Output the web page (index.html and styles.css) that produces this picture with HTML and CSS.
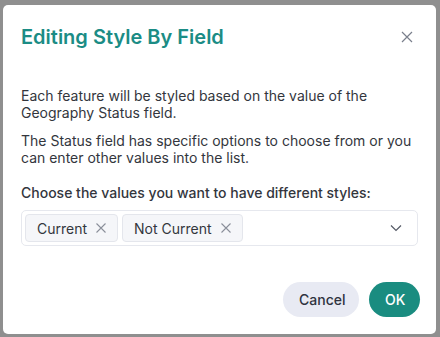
FILE: index.html
```html
<!DOCTYPE html>
<html lang="en">
<head>
    <meta charset="UTF-8">
    <meta name="viewport" content="width=device-width, initial-scale=1.0">
    <title>Editing Style By Field</title>
    <link rel="stylesheet" href="styles.css">
</head>
<body>
    <div class="dialog">
        <header class="dialog-header">
            <h1>Editing Style By Field</h1>
            <button class="close" aria-label="Close">
                <svg width="12" height="12" viewBox="0 0 12 12"><path d="M1 1L11 11M11 1L1 11" stroke="#7a7f8c" stroke-width="1.2" fill="none"/></svg>
            </button>
        </header>

        <div class="dialog-body">
            <p>Each feature will be styled based on the value of the Geography Status field.</p>
            <p>The Status field has specific options to choose from or you can enter other values into the list.</p>

            <label class="field-label">Choose the values you want to have different styles:</label>
            <div class="select">
                <div class="tags">
                    <span class="tag">Current
                        <svg width="10" height="10" viewBox="0 0 10 10"><path d="M0.5 0.5L9.5 9.5M9.5 0.5L0.5 9.5" stroke="#8a8f9a" stroke-width="1.1" fill="none"/></svg>
                    </span>
                    <span class="tag">Not Current
                        <svg width="10" height="10" viewBox="0 0 10 10"><path d="M0.5 0.5L9.5 9.5M9.5 0.5L0.5 9.5" stroke="#8a8f9a" stroke-width="1.1" fill="none"/></svg>
                    </span>
                </div>
                <svg class="chevron" width="12" height="8" viewBox="0 0 12 8"><path d="M1 1.5L6 6.5L11 1.5" stroke="#555a66" stroke-width="1.2" fill="none"/></svg>
            </div>
        </div>

        <footer class="dialog-footer">
            <button class="btn cancel">Cancel</button>
            <button class="btn ok">OK</button>
        </footer>
    </div>
</body>
</html>
```

FILE: styles.css
```css
* {
    margin: 0;
    padding: 0;
    box-sizing: border-box;
}

body {
    font-family: 'Inter', 'Noto Sans', sans-serif;
    background: #8f8f8f;
    color: #33363d;
    width: 440px;
    height: 337px;
    padding: 5px 4px 3px 3px;
}

.dialog {
    background: #fff;
    border-radius: 5px;
    height: 329px;
    display: flex;
    flex-direction: column;
}

.dialog-header {
    display: flex;
    justify-content: space-between;
    align-items: flex-start;
    padding: 20px 22px 0 18px;
    height: 64px;
}

.dialog-header h1 {
    font-size: 20px;
    font-weight: 600;
    color: #1b8c85;
    line-height: 24px;
}

.close {
    background: none;
    border: none;
    width: 14px;
    height: 14px;
    margin-top: 5px;
    display: flex;
    align-items: center;
    justify-content: center;
}

.dialog-body {
    padding: 18px 18px 0 18px;
    font-size: 14px;
    line-height: 17px;
}

.dialog-body p {
    margin-bottom: 11px;
}

.field-label {
    display: block;
    font-weight: 500;
    margin-top: 18px;
    margin-bottom: 9px;
}

.select {
    border: 1px solid #e6e8ee;
    border-radius: 5px;
    height: 36px;
    display: flex;
    align-items: center;
    justify-content: space-between;
    padding: 0 15px 0 3px;
}

.tags {
    display: flex;
    gap: 4px;
}

.tag {
    display: flex;
    align-items: center;
    gap: 9px;
    background: #f5f6f9;
    border: 1px solid #e4e6ec;
    border-radius: 4px;
    height: 28px;
    padding: 0 11px 0 11px;
    font-size: 14px;
}

.dialog-footer {
    margin-top: auto;
    display: flex;
    justify-content: flex-end;
    gap: 10px;
    padding: 0 16px 17px 0;
}

.btn {
    font-family: inherit;
    font-size: 14px;
    font-weight: 500;
    border: none;
    border-radius: 18px;
    height: 35px;
    padding: 0 16px;
}

.btn.cancel {
    background: #e8eaf3;
    color: #2f3340;
    width: 76px;
}

.btn.ok {
    background: #1a8c80;
    color: #fff;
    width: 51px;
}
```
